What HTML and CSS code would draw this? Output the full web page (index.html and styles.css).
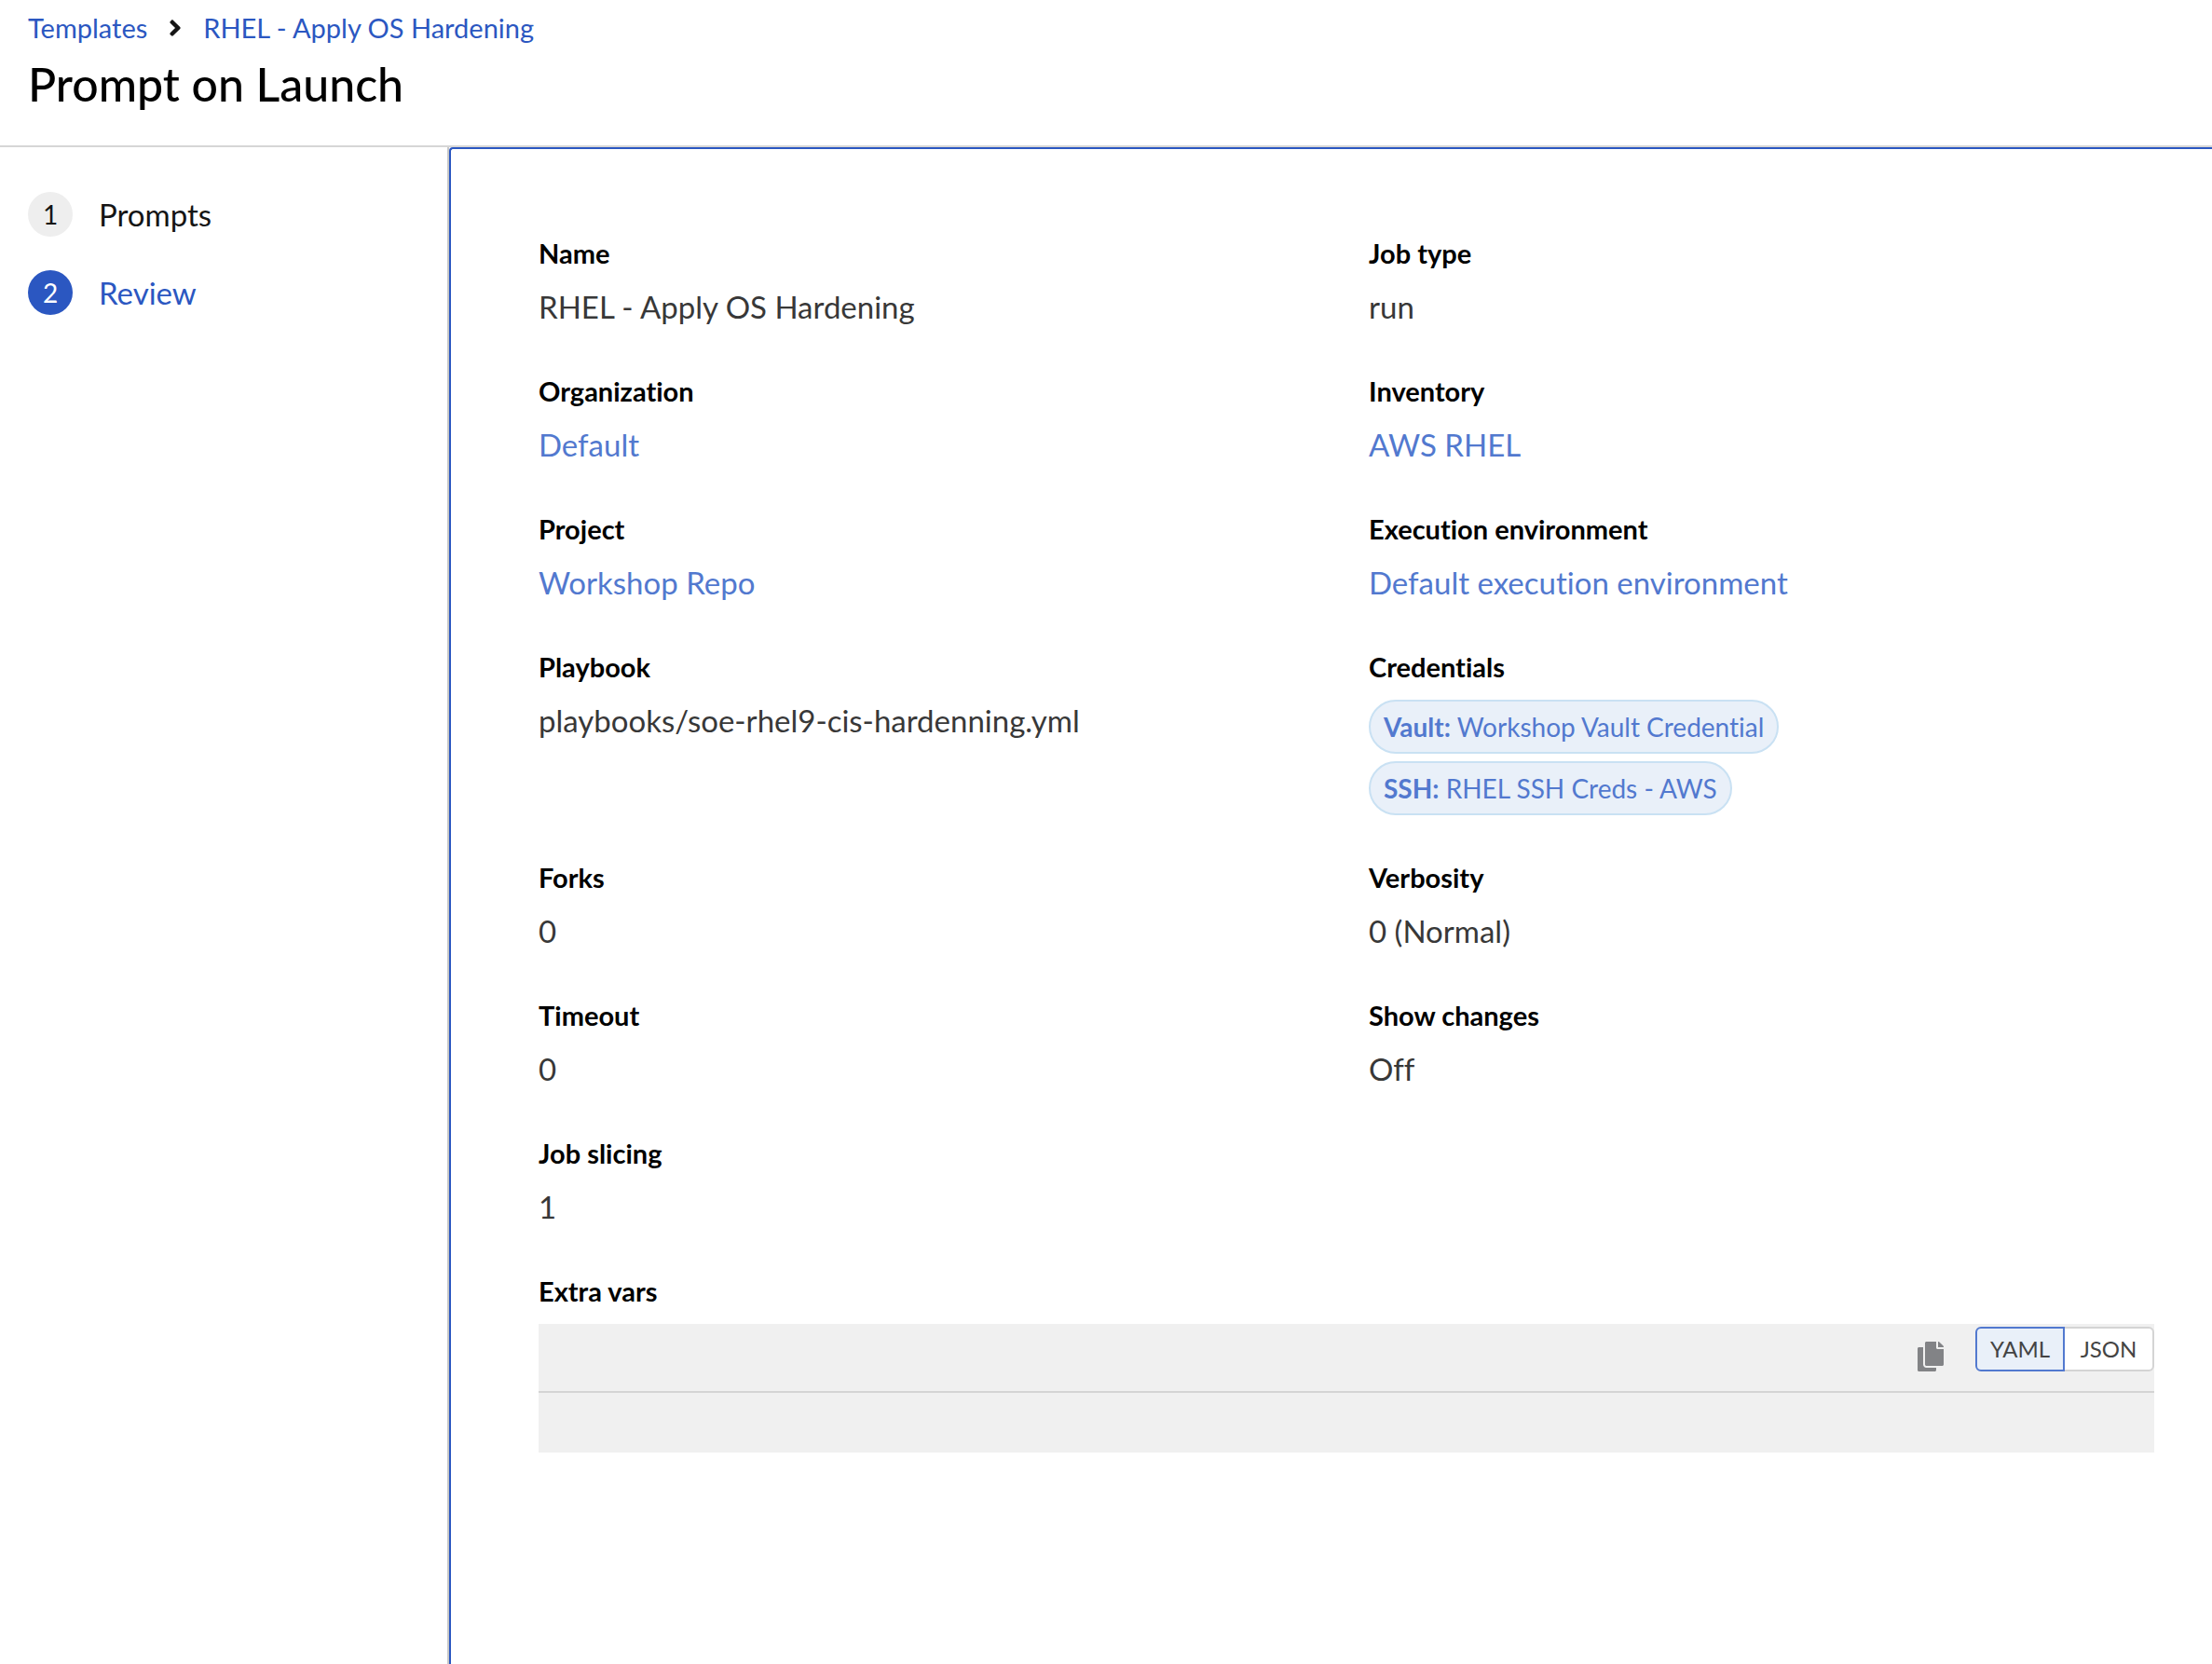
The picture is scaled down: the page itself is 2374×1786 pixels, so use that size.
FILE: index.html
```html
<!DOCTYPE html>
<html lang="en">
<head>
  <meta charset="utf-8">
  <meta name="viewport" content="width=device-width, initial-scale=1">
  <title>Prompt on Launch</title>
  <link rel="stylesheet" href="styles.css">
</head>
<body>
  <header class="page-header">
    <nav class="breadcrumb" aria-label="Breadcrumb">
      <a href="#templates">Templates</a>
      <svg class="breadcrumb-divider" viewBox="0 0 256 512" aria-hidden="true"><path d="M224.3 273l-136 136c-9.4 9.4-24.6 9.4-33.9 0l-22.6-22.6c-9.4-9.4-9.4-24.6 0-33.9l96.4-96.4-96.4-96.4c-9.4-9.4-9.4-24.6 0-33.9L54.3 103c9.4-9.4 24.6-9.4 33.9 0l136 136c9.5 9.4 9.5 24.6.1 34z"/></svg>
      <a href="#template">RHEL - Apply OS Hardening</a>
    </nav>
    <h1 class="page-title">Prompt on Launch</h1>
  </header>

  <div class="wizard">
    <nav class="wizard-nav" aria-label="Steps">
      <ol class="steps">
        <li><button class="step" type="button"><span class="step-number">1</span>Prompts</button></li>
        <li><button class="step step-current" type="button" aria-current="step"><span class="step-number">2</span>Review</button></li>
      </ol>
    </nav>

    <main class="wizard-main">
      <dl class="details">
        <div class="detail"><dt>Name</dt><dd>RHEL - Apply OS Hardening</dd></div>
        <div class="detail"><dt>Job type</dt><dd>run</dd></div>
        <div class="detail"><dt>Organization</dt><dd><a href="#organization">Default</a></dd></div>
        <div class="detail"><dt>Inventory</dt><dd><a href="#inventory">AWS RHEL</a></dd></div>
        <div class="detail"><dt>Project</dt><dd><a href="#project">Workshop Repo</a></dd></div>
        <div class="detail"><dt>Execution environment</dt><dd><a href="#environment">Default execution environment</a></dd></div>
        <div class="detail"><dt>Playbook</dt><dd>playbooks/soe-rhel9-cis-hardenning.yml</dd></div>
        <div class="detail">
          <dt>Credentials</dt>
          <dd class="detail-block chips">
            <a class="chip" href="#vault"><strong>Vault:</strong> Workshop Vault Credential</a>
            <a class="chip" href="#ssh"><strong>SSH:</strong> RHEL SSH Creds - AWS</a>
          </dd>
        </div>
        <div class="detail"><dt>Forks</dt><dd>0</dd></div>
        <div class="detail"><dt>Verbosity</dt><dd>0 (Normal)</dd></div>
        <div class="detail"><dt>Timeout</dt><dd>0</dd></div>
        <div class="detail"><dt>Show changes</dt><dd>Off</dd></div>
        <div class="detail"><dt>Job slicing</dt><dd>1</dd></div>
        <div class="detail detail-wide">
          <dt><label for="extra-vars">Extra vars</label></dt>
          <dd class="detail-block">
            <div class="editor">
              <div class="editor-toolbar">
                <button class="copy" type="button" aria-label="Copy">
                  <svg class="copy-icon" viewBox="0 0 448 512" aria-hidden="true"><path d="M320 448v40c0 13.255-10.745 24-24 24H24c-13.255 0-24-10.745-24-24V120c0-13.255 10.745-24 24-24h72v296c0 30.879 25.121 56 56 56h168zm0-344V0H152c-13.255 0-24 10.745-24 24v368c0 13.255 10.745 24 24 24h272c13.255 0 24-10.745 24-24V128H344c-13.2 0-24-10.8-24-24zm120.971-31.029L375.029 7.029A24 24 0 0 0 358.059 0H352v96h96v-6.059a24 24 0 0 0-7.029-16.97z"/></svg>
                </button>
                <div class="toggle-group" role="group" aria-label="Format">
                  <button class="toggle toggle-selected" type="button" aria-pressed="true">YAML</button>
                  <button class="toggle" type="button" aria-pressed="false">JSON</button>
                </div>
              </div>
              <textarea class="editor-body" id="extra-vars" readonly></textarea>
            </div>
          </dd>
        </div>
      </dl>
    </main>
  </div>
</body>
</html>
```
FILE: styles.css
```css
* {
  box-sizing: border-box;
}

body {
  margin: 0;
  min-height: 100vh;
  display: flex;
  flex-direction: column;
  background: #fff;
  color: #151515;
  font-family: Lato, "Open Sans", sans-serif;
  font-size: 33px;
  line-height: 48px;
  font-variant-ligatures: none;
}

a {
  color: inherit;
  text-decoration: none;
}

button {
  font: inherit;
  color: inherit;
  background: none;
  border: 0;
  padding: 0;
  cursor: pointer;
}

/* Header */
.page-header {
  display: flex;
  flex-direction: column;
  gap: 9px;
  padding: 9px 30px 36px;
  border-bottom: 2px solid #d6d6d6;
}

.breadcrumb {
  display: flex;
  align-items: center;
  gap: 23px;
  color: #2b57c1;
  font-size: 29px;
  line-height: 42px;
}

.breadcrumb-divider {
  width: 14px;
  height: 28px;
  fill: #151515;
}

.page-title {
  margin: 0;
  color: #000;
  font-size: 50px;
  font-weight: 500;
  line-height: 60px;
}

/* Wizard frame */
.wizard {
  flex: 1;
  display: flex;
}

.wizard-nav {
  flex: 0 0 482px;
  padding: 48px 30px;
  border-right: 2px solid #c7c7c7;
}

.steps {
  display: flex;
  flex-direction: column;
  gap: 36px;
  margin: 0;
  padding: 0;
  list-style: none;
}

.step {
  display: flex;
  align-items: center;
  gap: 28px;
}

.step-number {
  width: 48px;
  height: 48px;
  border-radius: 50%;
  background: #eee;
  font-size: 28px;
  text-align: center;
}

.step-current {
  color: #2b57c1;
}

.step-current .step-number {
  background: #2b57c1;
  color: #fff;
}

.wizard-main {
  flex: 1;
  min-width: 0;
  padding: 91px 62px 64px 94px;
  border: solid #2b57c1;
  border-width: 2px 0 0 2px;
  border-top-left-radius: 4px;
}

/* Details */
.details {
  display: grid;
  grid-template-columns: 1fr 1fr;
  gap: 46px 48px;
  margin: 0;
}

.detail {
  display: flex;
  flex-direction: column;
  gap: 12px;
  min-width: 0;
}

.detail-wide {
  grid-column: 1 / -1;
}

.detail dt {
  color: #000;
  font-size: 29px;
  font-weight: 700;
  line-height: 42px;
}

.detail dd {
  margin: 0;
  color: #383838;
}

.detail dd a {
  color: #5279cf;
}

.detail .detail-block {
  padding-top: 2px;
}

.chips {
  display: flex;
  flex-direction: column;
  align-items: flex-start;
  gap: 8px;
}

.chip {
  padding: 0 14px;
  border: 2px solid #c9e1f3;
  border-radius: 29px;
  background: #e9f0f9;
  font-size: 28px;
  line-height: 54px;
}

/* Variables editor */
.editor {
  background: #f0f0f0;
}

.editor-toolbar {
  display: flex;
  justify-content: flex-end;
  align-items: flex-start;
  gap: 34px;
  padding-top: 3px;
  height: 74px;
  border-bottom: 2px solid #d4d4d4;
}

.copy {
  display: flex;
  padding: 16px 0;
}

.copy-icon {
  width: 28px;
  height: 32px;
  fill: #828386;
}

.toggle-group {
  display: flex;
}

.toggle {
  min-width: 96px;
  height: 48px;
  padding: 0 12px;
  border: 2px solid #d4d4d4;
  border-left: 0;
  border-radius: 0 6px 6px 0;
  background: #fff;
  color: #444;
  font-size: 24px;
  line-height: 44px;
}

.toggle-selected {
  border: 2px solid #5279cf;
  border-radius: 6px 0 0 6px;
  background: #e9f0f9;
}

.editor-body {
  display: block;
  width: 100%;
  height: 64px;
  padding: 8px 16px;
  border: 0;
  background: transparent;
  color: inherit;
  font: 28px/48px "Liberation Mono", monospace;
  resize: none;
}
```
